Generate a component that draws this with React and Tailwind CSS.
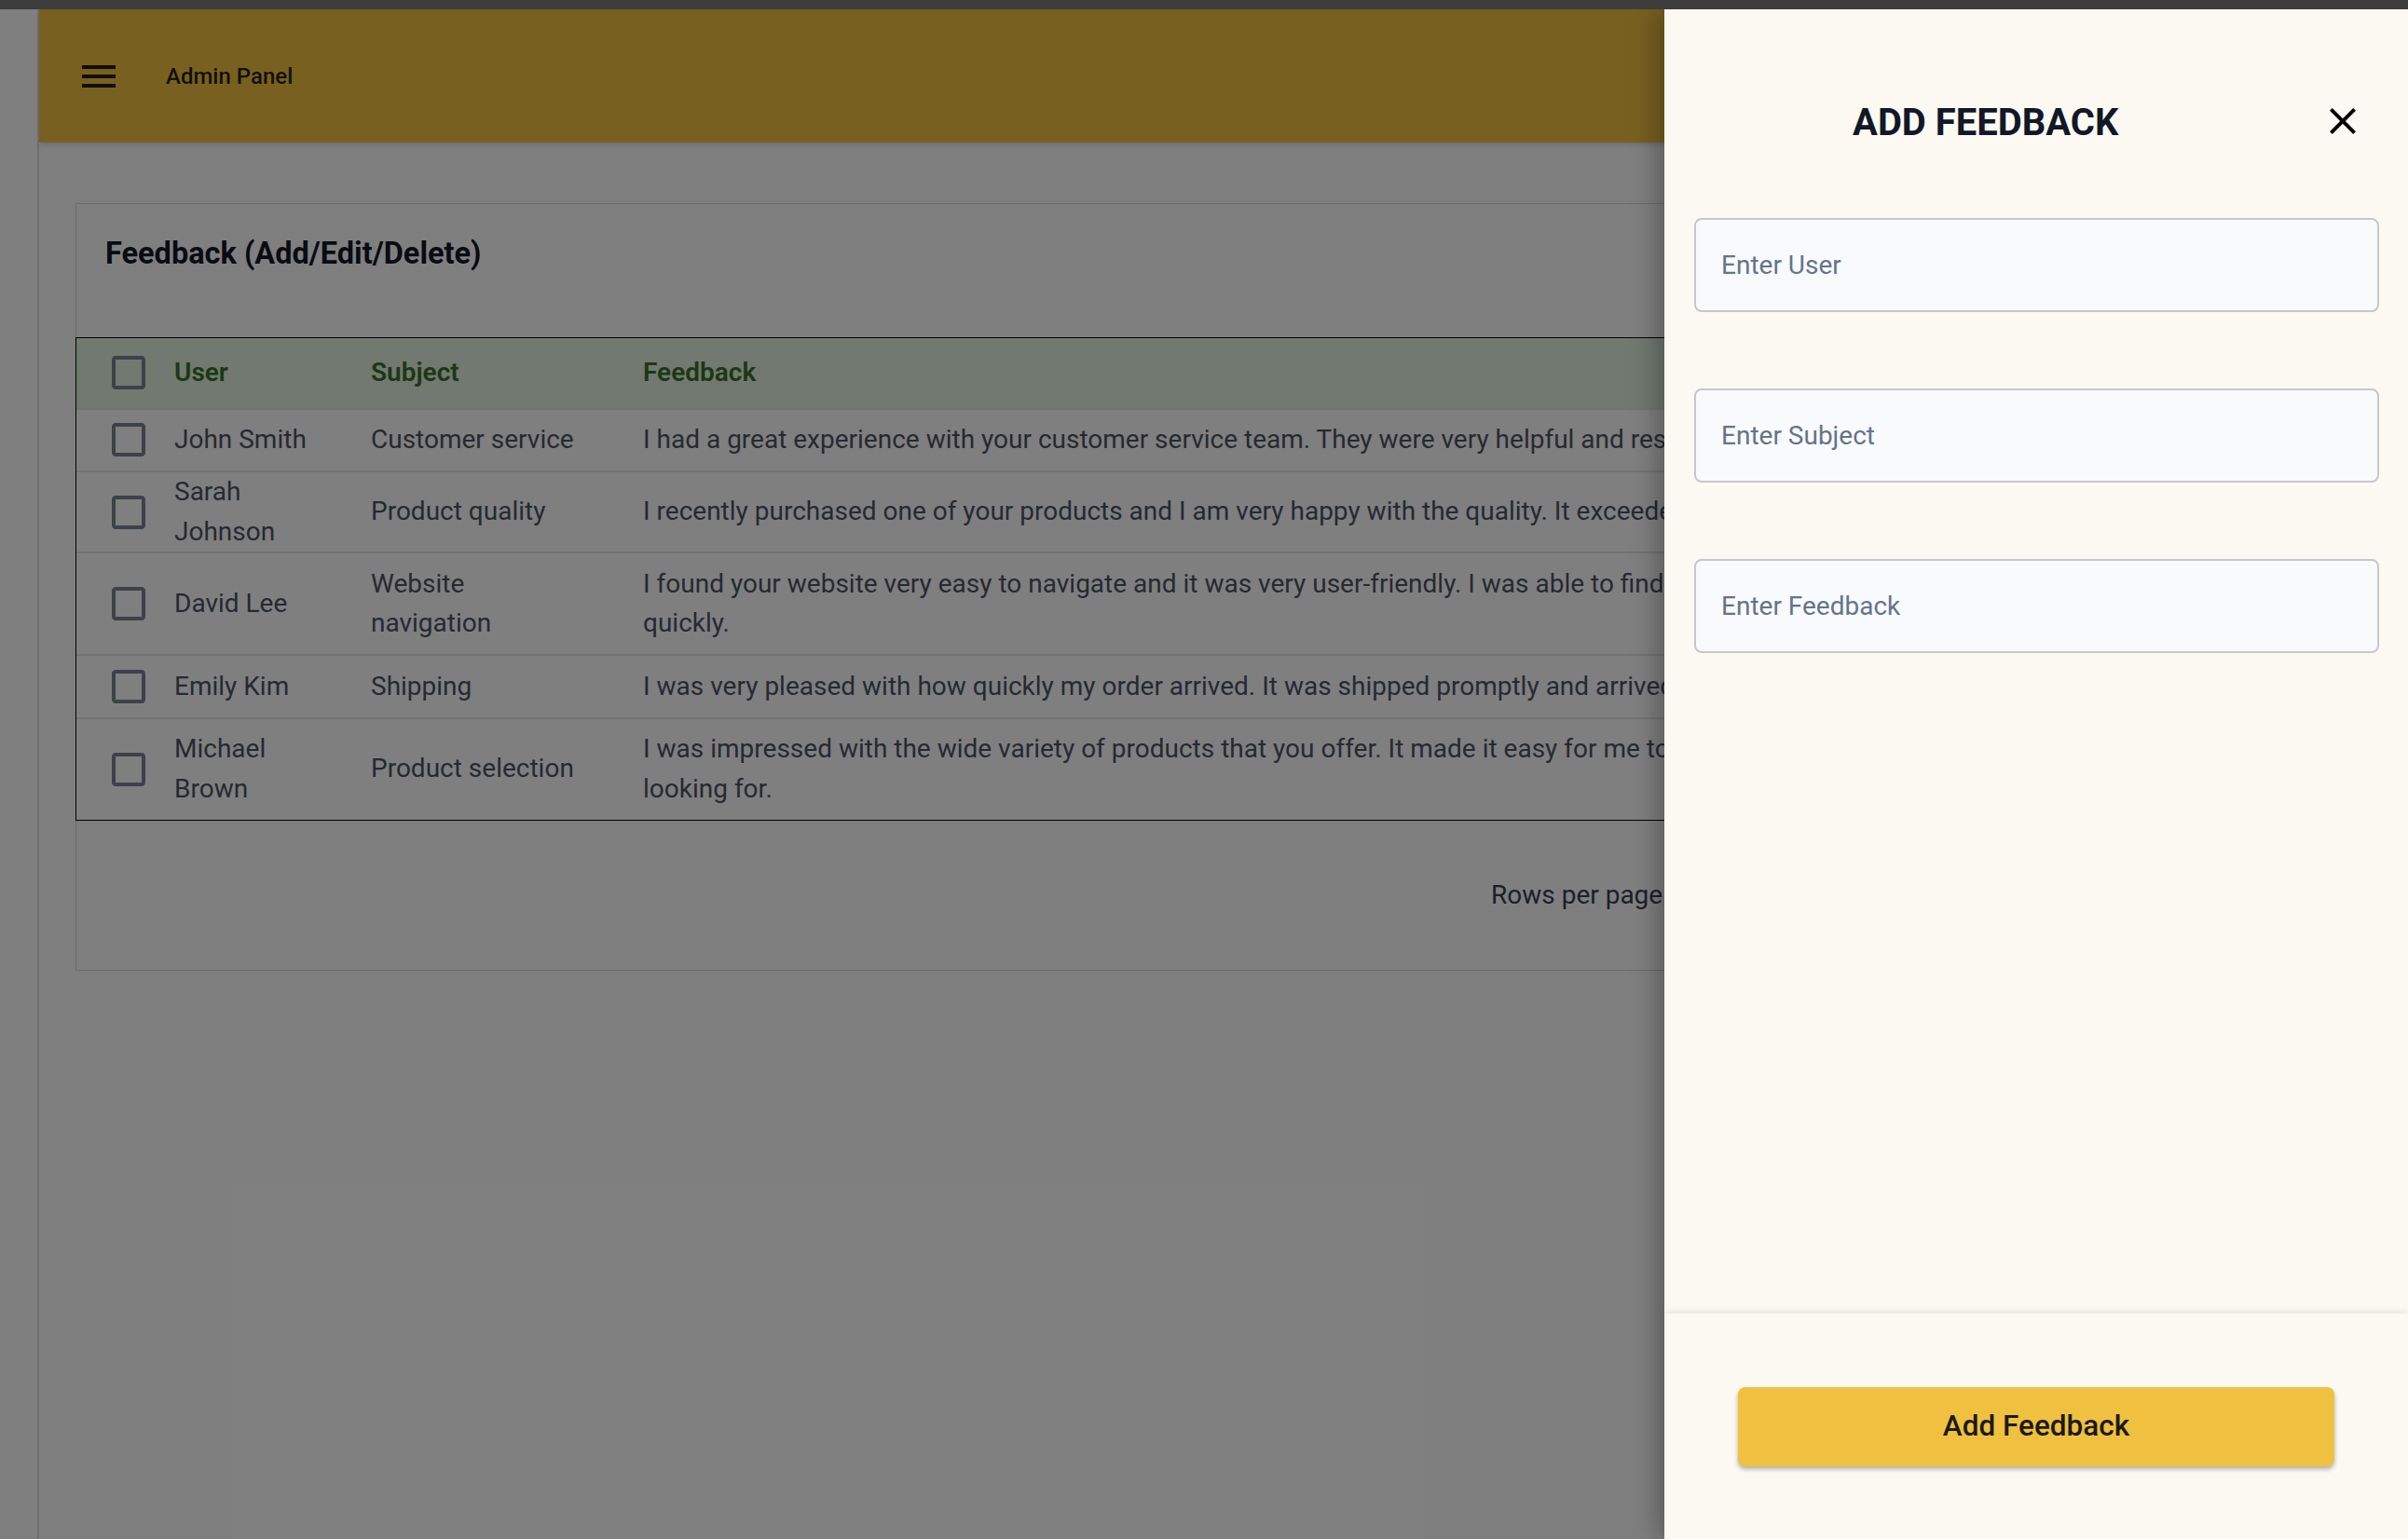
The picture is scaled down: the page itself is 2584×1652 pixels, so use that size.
import React from "react";

const rows = [
  {
    user: "John Smith",
    subject: "Customer service",
    feedback:
      "I had a great experience with your customer service team. They were very helpful and responsive to my questions.",
  },
  {
    user: "Sarah Johnson",
    subject: "Product quality",
    feedback:
      "I recently purchased one of your products and I am very happy with the quality. It exceeded my expectations.",
  },
  {
    user: "David Lee",
    subject: "Website navigation",
    feedback:
      "I found your website very easy to navigate and it was very user-friendly. I was able to find what I was looking for quickly.",
  },
  {
    user: "Emily Kim",
    subject: "Shipping",
    feedback:
      "I was very pleased with how quickly my order arrived. It was shipped promptly and arrived in perfect condition.",
  },
  {
    user: "Michael Brown",
    subject: "Product selection",
    feedback:
      "I was impressed with the wide variety of products that you offer. It made it easy for me to find exactly what I was looking for.",
  },
];

function CheckboxIcon() {
  return (
    <svg viewBox="0 0 24 24" className="block h-12 w-12 fill-[#7a8394]">
      <path d="M19 5v14H5V5h14m0-2H5c-1.1 0-2 .9-2 2v14c0 1.1.9 2 2 2h14c1.1 0 2-.9 2-2V5c0-1.1-.9-2-2-2z" />
    </svg>
  );
}

function MenuIcon() {
  return (
    <svg viewBox="0 0 24 24" className="block h-12 w-12 fill-current">
      <path d="M3 18h18v-2H3v2zm0-5h18v-2H3v2zm0-7v2h18V6H3z" />
    </svg>
  );
}

function CloseIcon() {
  return (
    <svg viewBox="0 0 24 24" className="block h-12 w-12 fill-black">
      <path d="M19 6.41L17.59 5 12 10.59 6.41 5 5 6.41 10.59 12 5 17.59 6.41 19 12 13.41 17.59 19 19 17.59 13.41 12z" />
    </svg>
  );
}

function EditIcon() {
  return (
    <svg viewBox="0 0 24 24" className="block h-11 w-11 fill-[#2563eb]">
      <path d="M3 17.25V21h3.75L17.81 9.94l-3.75-3.75L3 17.25zM20.71 7.04a.996.996 0 0 0 0-1.41l-2.34-2.34a.996.996 0 0 0-1.41 0l-1.83 1.83 3.75 3.75 1.83-1.83z" />
    </svg>
  );
}

function DeleteIcon() {
  return (
    <svg viewBox="0 0 24 24" className="block h-11 w-11 fill-[#dc2626]">
      <path d="M6 19c0 1.1.9 2 2 2h8c1.1 0 2-.9 2-2V7H6v12zM19 4h-3.5l-1-1h-5l-1 1H5v2h14V4z" />
    </svg>
  );
}

export default function App() {
  return (
    <div className="min-h-screen bg-white font-[family-name:Roboto,sans-serif]">
      <div className="h-[10px] bg-[#3c3c3c]" />

      <div className="relative flex h-[1642px] overflow-hidden">
        {/* Sidebar */}
        <aside className="w-[42px] shrink-0 border-r-2 border-[#dedede] bg-white" />

        <div className="flex flex-1 flex-col">
          {/* Top bar */}
          <header className="flex h-[143px] items-center gap-[48px] bg-[#f0c040] pl-[40px] text-black/85 shadow-md">
            <MenuIcon />
            <span className="text-[24px] font-medium">Admin Panel</span>
          </header>

          <main className="px-[39px] pt-[65px]">
            <div className="border border-[#d6d6d6] bg-white">
              <div className="box-content flex h-[48px] items-center justify-between pb-[66px] pl-[31px] pr-[40px] pt-[29px]">
                <h1 className="text-[32.5px] font-bold leading-[48px] text-[#111827]">
                  Feedback (Add/Edit/Delete)
                </h1>
                <button className="h-[48px] rounded-lg bg-[#f0c040] px-8 text-[26px] font-medium text-black/85">
                  Add Feedback
                </button>
              </div>

              <div className="-mx-px border border-black">
                <table className="w-full table-fixed text-left text-[28px] leading-[42.5px] text-[#4b5563]">
                  <thead>
                    <tr className="border-b-2 border-[#e6e6e6] bg-[#e2f3e2] text-[#3b7026]">
                      <th className="w-[105px] pl-[32px] align-middle">
                        <CheckboxIcon />
                      </th>
                      <th className="w-[211px] py-[16px] pr-[41px] font-semibold">User</th>
                      <th className="w-[292px] py-[16px] pr-[66px] font-semibold">Subject</th>
                      <th className="w-[1470px] py-[16px] pr-[40px] font-semibold">Feedback</th>
                      <th className="py-[16px] font-semibold">Actions</th>
                    </tr>
                  </thead>
                  <tbody>
                    {rows.map((row, i) => (
                      <tr key={i} className="border-b-2 border-[#e6e6e6] last:border-b-0">
                        <td className="pl-[32px] align-middle">
                          <CheckboxIcon />
                        </td>
                        <td className="pr-[41px] align-middle">{row.user}</td>
                        <td className="py-[11.5px] pr-[66px] align-middle">{row.subject}</td>
                        <td className="py-[11.5px] pr-[40px] align-middle">{row.feedback}</td>
                        <td className="align-middle">
                          <div className="flex gap-4">
                            <EditIcon />
                            <DeleteIcon />
                          </div>
                        </td>
                      </tr>
                    ))}
                  </tbody>
                </table>
              </div>

              {/* Pagination */}
              <div className="flex h-[160px] items-center justify-end pr-[344px] text-[28px] text-[#374151]">
                <span className="w-[200px]">Rows per page:</span>
                <span className="flex w-[110px] items-center gap-2">
                  5 <span className="text-[20px]">▾</span>
                </span>
                <span className="w-[170px]">1–5 of 5</span>
                <span className="flex w-[120px] gap-6 text-[#9ca3af]">
                  <span>‹</span>
                  <span>›</span>
                </span>
              </div>
            </div>
          </main>
        </div>

        {/* Backdrop */}
        <div className="absolute inset-0 bg-black/50" />

        {/* Drawer */}
        <div className="absolute right-0 top-0 flex h-full w-[798px] flex-col bg-[#fcf9f2] shadow-[-10px_0_24px_rgba(0,0,0,0.25)]">
          <div className="flex-1 pl-[32px] pr-[31px] pt-[96px]">
            <div className="flex h-12 items-center">
              <h2 className="ml-[170px] mt-[3px] flex-1 text-[40px] font-bold leading-[48px] text-[#111827]">
                ADD FEEDBACK
              </h2>
              <button className="mr-[15px]">
                <CloseIcon />
              </button>
            </div>

            <div className="mt-[80px] flex flex-col gap-[82px]">
              {["Enter User", "Enter Subject", "Enter Feedback"].map((p) => (
                <input
                  key={p}
                  placeholder={p}
                  className="h-[101px] w-full rounded-lg border-2 border-[#c6c7cb] bg-[#f8fafc] px-[27px] text-[28px] text-[#111827] outline-none placeholder:text-[#64748b]"
                />
              ))}
            </div>
          </div>

          <div className="flex h-[242px] items-center justify-center shadow-[0_-3px_6px_rgba(0,0,0,0.07)]">
            <button className="h-[85px] w-[640px] rounded-lg bg-[#f0c040] text-[31.5px] font-medium text-[#1c1a14] shadow-[0_3px_5px_rgba(0,0,0,0.3)]">
              Add Feedback
            </button>
          </div>
        </div>
      </div>
    </div>
  );
}
